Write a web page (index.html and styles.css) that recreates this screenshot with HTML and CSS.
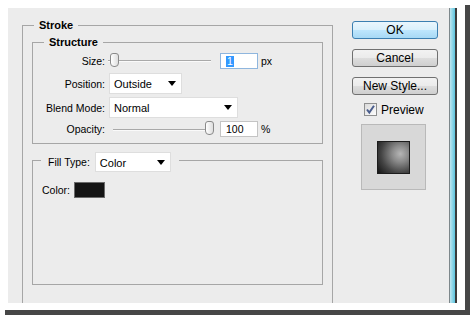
FILE: index.html
```html
<!DOCTYPE html>
<html lang="en">
<head>
    <meta charset="UTF-8">
    <meta name="viewport" content="width=device-width, initial-scale=1.0">
    <title>Layer Style - Stroke</title>
    <link rel="stylesheet" href="styles.css">
</head>
<body>

    <div class="frame">
        <div class="window">
            <div class="dialog">

                <fieldset class="group stroke">
                    <legend>Stroke</legend>

                    <fieldset class="group structure">
                        <legend>Structure</legend>

                        <div class="row row-short">
                            <span class="lbl">Size:</span>
                            <div class="slider size">
                                <div class="track"></div>
                                <div class="thumb"></div>
                            </div>
                            <div class="field focus"><span class="hl">1</span></div>
                            <span class="unit">px</span>
                        </div>

                        <div class="row">
                            <span class="lbl">Position:</span>
                            <div class="select w-pos"><span>Outside</span><i class="arrow"></i></div>
                        </div>

                        <div class="row row-tight">
                            <span class="lbl">Blend Mode:</span>
                            <div class="select w-blend"><span>Normal</span><i class="arrow"></i></div>
                        </div>

                        <div class="row row-short row-tight">
                            <span class="lbl">Opacity:</span>
                            <div class="slider opacity">
                                <div class="track"></div>
                                <div class="thumb"></div>
                            </div>
                            <div class="field"><span>100</span></div>
                            <span class="unit">%</span>
                        </div>
                    </fieldset>

                    <fieldset class="group fill">
                        <legend>
                            <div class="legend-row">
                                <span class="fill-lbl">Fill Type:</span>
                                <div class="select w-fill"><span>Color</span><i class="arrow"></i></div>
                            </div>
                        </legend>
                        <div class="fill-body">
                            <span>Color:</span>
                            <div class="swatch"></div>
                        </div>
                    </fieldset>
                </fieldset>

                <div class="actions">
                    <button class="btn default">OK</button>
                    <button class="btn">Cancel</button>
                    <button class="btn">New Style...</button>
                    <label class="preview-check">
                        <svg width="13" height="13" viewBox="0 0 13 13">
                            <defs>
                                <linearGradient id="cb" x1="0" y1="0" x2="1" y2="1">
                                    <stop offset="0" stop-color="#d8d8d8"/>
                                    <stop offset="1" stop-color="#ffffff"/>
                                </linearGradient>
                            </defs>
                            <rect x="0.5" y="0.5" width="12" height="12" fill="url(#cb)" stroke="#8e8f8f"/>
                            <path d="M3 6.5 L5.3 9.5 L10 2.8" fill="none" stroke="#4a5d8c" stroke-width="2"/>
                        </svg>
                        <span>Preview</span>
                    </label>
                    <div class="preview-box">
                        <div class="preview-swatch"></div>
                    </div>
                </div>

            </div>
            <div class="edge"></div>
        </div>
    </div>

</body>
</html>
```

FILE: styles.css
```css
* {
    box-sizing: border-box;
}
body {
    margin: 0;
    padding: 0 5px 5px 0;
    min-height: 315px;
    background: #fff;
    font-family: "Liberation Sans", Arial, sans-serif;
    font-size: 10.5px;
    color: #000;
}
.frame {
    width: 465px;
    height: 310px;
    padding: 8px 8px 7px 8px;
    background: #fff;
    box-shadow: 5px 5px 0 #474747;
}
.window {
    display: flex;
    height: 295px;
}
.dialog {
    display: flex;
    width: 441px;
    height: 295px;
    padding-top: 10px;
    background: #ececec;
    overflow: hidden;
}
.edge {
    width: 8px;
    border-left: 1px solid #7d878b;
    border-right: 2px solid #3a3a3a;
    background: linear-gradient(90deg, #bfe6f0, #5cc4de);
}

/* group boxes */
.group {
    margin: 0;
    padding: 0;
    border: 1px solid #a6a6a6;
    min-width: 0;
}
.group legend {
    padding: 0 5px;
    line-height: 14px;
    font-weight: bold;
    font-size: 11px;
}
.stroke {
    width: 311px;
    margin-left: 14px;
    padding-bottom: 30px;
    align-self: flex-start;
}
.stroke > legend {
    margin-left: 11px;
}
.structure {
    margin: 3px 9px 0 9px;
    padding: 4px 0 6px 0;
}
.structure > legend {
    margin-left: 11px;
}
.fill {
    margin: 4px 9px 0 9px;
}
.fill > legend {
    margin-left: 8px;
    padding: 4px 8px 0 7px;
    font-weight: normal;
}
.legend-row {
    display: flex;
    align-items: center;
}
.fill-lbl {
    font-size: 10.5px;
    margin-right: 5px;
}

/* rows */
.row {
    display: flex;
    align-items: center;
    height: 21px;
    margin-top: 4px;
}
.row:first-of-type {
    margin-top: 0;
}
.row-short {
    height: 16px;
}
.row-tight {
    margin-top: 3px;
}
.lbl {
    width: 72px;
    text-align: right;
    margin-right: 4px;
}

/* slider */
.slider {
    position: relative;
    width: 106px;
    height: 16px;
    margin-left: -1px;
}
.track {
    position: absolute;
    top: 7px;
    left: 0;
    right: 3px;
    height: 2px;
    border-top: 1px solid #a9a9a9;
    border-bottom: 1px solid #fafafa;
}
.opacity .track {
    left: 5px;
    right: 4px;
    top: 8px;
}
.thumb {
    position: absolute;
    top: 0;
    left: 2px;
    width: 9px;
    height: 14px;
    border: 1px solid #8a8a8a;
    border-radius: 3px 3px 4px 4px;
    background: linear-gradient(90deg, #ffffff, #dedede);
}
.opacity .thumb {
    left: 97px;
}

/* fields */
.field {
    width: 38px;
    height: 16px;
    margin-left: 6px;
    padding-left: 5px;
    background: #fff;
    border: 1px solid #c4c4c4;
    display: flex;
    align-items: center;
}
.field.focus {
    border-color: #8fb6de;
}
.hl {
    background: #3399ff;
    color: #fff;
    padding: 0 1px;
    line-height: 11px;
}
.unit {
    margin-left: 3px;
}

/* dropdowns */
.select {
    display: flex;
    align-items: center;
    justify-content: space-between;
    height: 21px;
    padding: 1px 5px 0 4px;
    background: #fff;
    border: 1px solid #dedede;
    font-size: 11px;
    font-weight: normal;
}
.w-pos {
    width: 73px;
}
.w-blend {
    width: 129px;
}
.w-fill {
    width: 76px;
    height: 20px;
}
.arrow {
    width: 0;
    height: 0;
    border-left: 4px solid transparent;
    border-right: 4px solid transparent;
    border-top: 5px solid #000;
    margin-top: -1px;
}

/* fill */
.fill-body {
    display: flex;
    align-items: center;
    padding: 10px 0 86px 9px;
}
.swatch {
    width: 31px;
    height: 16px;
    margin-left: 4px;
    background: #151515;
    border: 1px solid #6b6b6b;
}

/* right column */
.actions {
    display: flex;
    flex-direction: column;
    width: 86px;
    margin-left: 19px;
    padding-top: 3px;
}
.btn {
    width: 86px;
    height: 18px;
    margin: 0 0 10px 0;
    padding: 0;
    font-family: "Liberation Sans", Arial, sans-serif;
    font-size: 12px;
    line-height: 16px;
    color: #000;
    border: 1px solid #707070;
    border-radius: 3px;
    background: linear-gradient(#f2f2f2 0%, #ebebeb 50%, #dddddd 51%, #cfcfcf 100%);
}
.btn.default {
    border-color: #3c7fb1;
    background: linear-gradient(#eaf6fd 0%, #d9f0fc 50%, #bee6fd 51%, #a7d9f5 100%);
}
.preview-check {
    display: flex;
    align-items: center;
    margin: -2px 0 0 12px;
    height: 13px;
    font-size: 12px;
}
.preview-check svg {
    margin-right: 4px;
}
.preview-box {
    display: flex;
    align-items: center;
    justify-content: center;
    width: 65px;
    height: 66px;
    margin: 8px 0 0 9px;
    background: #d8d8d8;
    border: 1px solid #b9b9b9;
}
.preview-swatch {
    width: 33px;
    height: 33px;
    border: 1px solid #1c1c1c;
    background: radial-gradient(circle at 72% 38%, #b6b6b6 0%, #8a8a8a 28%, #444 65%, #141414 100%);
}
```
